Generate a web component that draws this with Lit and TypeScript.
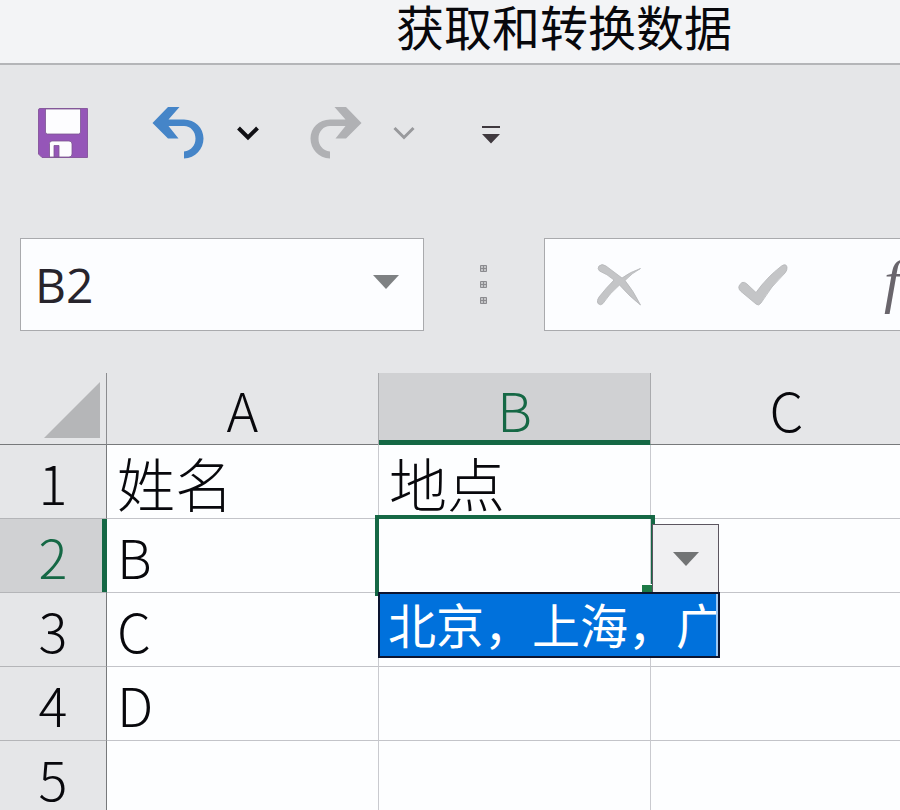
import { LitElement, html, css, svg, nothing } from "lit";
import { customElement, state } from "lit/decorators.js";

const COLUMNS = ["A", "B", "C"];
const ROWS: string[][] = [
  ["姓名", "地点", ""],
  ["B", "", ""],
  ["C", "", ""],
  ["D", "", ""],
  ["", "", ""],
];

const saveIcon = svg`<svg width="50" height="50" viewBox="0 0 50 50">
  <path d="M2 0.5H49.5V49.5H4L0.5 46V2Q0.5 0.5 2 0.5Z" fill="#9556b8" stroke="#8a5aa0"/>
  <path d="M7.500 1H42.500V24Q42.500 26 40.500 26H9.500Q7.500 26 7.500 24Z" fill="#fdfdff" stroke="#7b5590" stroke-width="0.8"/>
  <path d="M14 33H31Q34 33 34 36V46Q34 49 31 49H11.500V35.500Q11.500 33 14 33Z" fill="#fdfdff" stroke="#7b5590" stroke-width="0.8"/>
  <path d="M16 49V37.500H21V49Z" fill="#9556b8" stroke="#7b5590" stroke-width="0.8"/>
</svg>`;

const bentArrow = svg`<svg width="52" height="52" viewBox="0 0 52 52">
  <path d="M16 0H27.500L16.500 12.500H32C43 12.500 51.500 21 51.500 31.500C51.500 42 43.500 51 32 51.500V44.500C39.500 43.500 43.500 38 43.500 31.500C43.500 24.500 38.500 19 32 19H16.500L26.500 31.500H16L0.500 16Z"/>
</svg>`;

const chevron = svg`<svg width="24" height="16" viewBox="0 0 24 16">
  <path d="M2.500 3L12 12.500L21.500 3" fill="none" stroke="currentColor"/>
</svg>`;

const customizeIcon = svg`<svg width="18" height="18" viewBox="0 0 18 18">
  <path d="M0 0H18V2H0ZM0 8H18L9 17.500Z" fill="#3f393e"/>
</svg>`;

const triangle = svg`<svg class="triangle" width="26" height="14" viewBox="0 0 26 14">
  <path d="M0 0H26L13 14Z"/>
</svg>`;

const gripIcon = svg`<svg width="8" height="40" viewBox="0 0 8 40">
  ${[0, 16, 32].map(
    (y) => svg`<path d="M0.500 ${y + 0.5}h6v6h-6zM3.500 ${y}v7M0 ${y + 3.5}h7" fill="#c4c5c7" stroke="#8b8b8f"/>`
  )}
</svg>`;

const cancelIcon = svg`<svg width="44" height="42" viewBox="0 0 44 42">
  <path d="M2 2Q5 -1 9 2Q17 8 25 14Q33 8 43.500 4.500Q35 9 28 16.500Q36 26 43.500 41Q33 33 22.500 21Q12 30 6 39.500Q3.500 42 1 39.500Q-1 37 2 33Q9 24 17 16Q10 10 2.500 7Q0 4.500 2 2Z" fill="#c4c5c7" stroke="#b4b5b7" stroke-width="0.8"/>
</svg>`;

const acceptIcon = svg`<svg width="50" height="42" viewBox="0 0 50 42">
  <path d="M4 18.500Q6.500 17.500 9 20L18 28.500Q29 13 43.500 2Q48 -1 49 3Q49.500 6 47 9Q33 22 23 39Q20.500 42.500 18 40L3 27.500Q-2 23 4 18.500Z" fill="#c4c5c7" stroke="#b4b5b7" stroke-width="0.8"/>
</svg>`;

const cornerIcon = svg`<svg width="56" height="56" viewBox="0 0 56 56">
  <path d="M0 56L56 0V56Z" fill="#b5b6b8"/>
</svg>`;

@customElement("app-root")
export class AppRoot extends LitElement {
  @state() private open = true;

  static styles = css`
    :host {
      display: block;
      height: 100vh;
      overflow: hidden;
      background: #e5e6e8;
      color: #08080c;
      font-family: "Noto Sans CJK SC", sans-serif;
      font-weight: 300;
    }
    * {
      box-sizing: border-box;
    }
    button {
      display: flex;
      align-items: center;
      justify-content: center;
      padding: 0;
      border: 0;
      background: none;
      color: inherit;
      font: inherit;
    }
    svg {
      display: block;
      flex: none;
    }
    .group-title {
      margin: 0;
      padding: 0 0 13px 228px;
      border-bottom: 2px solid #b4b5b8;
      background: #f3f4f6;
      font-size: 48px;
      font-weight: 400;
      line-height: 50px;
      text-align: center;
      white-space: nowrap;
    }
    .toolbar {
      display: flex;
      align-items: center;
      height: 136px;
      padding-left: 38px;
      gap: 50px;
    }
    .save {
      margin-right: 14px;
    }
    .split {
      display: flex;
      align-items: center;
      gap: 32px;
    }
    .undo {
      color: #101014;
      fill: #4585c8;
      stroke-width: 4px;
    }
    .redo {
      gap: 30px;
      color: #98999c;
      fill: #b0b1b4;
      stroke-width: 3px;
    }
    .redo .arrow {
      transform: scaleX(-1);
    }
    .customize {
      margin-left: 16px;
      padding-top: 4px;
    }
    .formula-row {
      display: flex;
      align-items: center;
      margin: 37px 0 42px;
      padding-left: 20px;
    }
    .field {
      display: flex;
      align-items: center;
      height: 93px;
      border: 1px solid #a9aaad;
      background: #fcfdff;
    }
    .name-box {
      flex: none;
      width: 404px;
      padding: 0 24px 0 14px;
    }
    .name-input {
      flex: 1;
      min-width: 0;
      padding: 0;
      border: 0;
      outline: 0;
      background: none;
      color: #27242c;
      font: 400 48px/64px "Open Sans", "Noto Sans", sans-serif;
    }
    .triangle {
      fill: #7e8183;
    }
    .name-arrow {
      padding-bottom: 6px;
    }
    .grip {
      flex: none;
      width: 120px;
      display: flex;
      justify-content: center;
    }
    .formula-box {
      flex: 1;
      min-width: 0;
      padding-left: 52px;
      border-right: 0;
      overflow: hidden;
    }
    .accept {
      margin: 0 80px 0 97px;
    }
    .fx {
      flex: none;
      padding: 0 16px 8px;
      color: #69656c;
      font: italic 400 60px/80px "Liberation Serif", serif;
    }
    .sheet {
      width: 923px;
      min-width: 100%;
      table-layout: fixed;
      border-collapse: separate;
      border-spacing: 0;
      font-size: 54px;
      line-height: 72px;
    }
    .row-head-col {
      width: 107px;
    }
    .data-col {
      width: 272px;
    }
    th,
    td {
      height: 74px;
      padding: 0;
      border-right: 1px solid #c9cacf;
      border-bottom: 1px solid #c3c4c9;
      white-space: nowrap;
    }
    th {
      font-weight: 300;
    }
    thead th {
      height: 72px;
      line-height: 68px;
      border-right-color: #d5d6d8;
      border-bottom-color: #77797b;
    }
    tbody th {
      border-right-color: #77797b;
      border-bottom-color: #b4b5b8;
    }
    thead .corner {
      border-right-color: #8b8c8f;
    }
    .corner svg {
      margin: 2px 0 0 44px;
    }
    td {
      padding-left: 10px;
      background: #fdfeff;
    }
    .label {
      font-size: 58px;
    }
    th.active {
      background: #d0d1d3;
      color: #156845;
    }
    thead th.active {
      border-right-color: #a9aaad;
      box-shadow: -1px 0 #a9aaad, inset 0 -4px #156845;
      border-bottom-color: #156845;
    }
    tbody th.active {
      border-right-color: #156845;
      box-shadow: inset -4px 0 #156845;
    }
    .selected {
      position: relative;
    }
    .selection {
      position: absolute;
      z-index: 1;
      inset: -4px -5px -4px -4px;
      border: 4px solid #156845;
      pointer-events: none;
    }
    .handle {
      position: absolute;
      right: -1px;
      bottom: 0;
      width: 11px;
      height: 8px;
      border: solid #fdfeff;
      border-width: 1px 0 0 1px;
      background: #1d7a46;
    }
    .opener {
      position: absolute;
      z-index: 2;
      left: 273px;
      top: 5px;
      width: 67px;
      height: 69px;
      border: 1px solid #5c5560;
      background: #f0f0f2;
    }
    .opener .triangle {
      fill: #727475;
    }
    .choices {
      position: absolute;
      z-index: 3;
      left: -1px;
      top: 73px;
      width: 342px;
      border: 2px solid #0b1430;
      background: #0071dc;
    }
    .choice {
      display: block;
      width: 100%;
      height: 62px;
      padding: 0 0 4px 8px;
      border-right: 2px solid #9cc8f3;
      overflow: hidden;
      color: #fff;
      font-size: 48px;
      font-weight: 400;
      line-height: 58px;
      text-align: left;
      white-space: nowrap;
    }
  `;

  private toggle() {
    this.open = !this.open;
  }

  private renderSelection() {
    return html`
      <div class="selection"><span class="handle"></span></div>
      <button class="opener" aria-label="选择地点" aria-expanded=${this.open} @click=${this.toggle}>${triangle}</button>
      ${this.open
        ? html`<div class="choices" role="listbox" aria-label="地点">
            <button class="choice" role="option" aria-selected="true" @click=${this.toggle}>北京，上海，广</button>
          </div>`
        : nothing}
    `;
  }

  private renderCell(text: string, row: number, col: number) {
    if (row === 1 && col === 1) {
      return html`<td class="selected">${this.renderSelection()}</td>`;
    }
    return html`<td class=${row === 0 ? "label" : "value"}>${text}</td>`;
  }

  render() {
    return html`
      <h1 class="group-title" lang="zh-CN">获取和转换数据</h1>
      <div class="toolbar" role="toolbar" aria-label="快速访问工具栏">
        <button class="save" aria-label="保存">${saveIcon}</button>
        <div class="split undo">
          <button class="arrow" aria-label="撤消">${bentArrow}</button>
          <button aria-label="撤消列表">${chevron}</button>
        </div>
        <div class="split redo">
          <button class="arrow" aria-label="恢复">${bentArrow}</button>
          <button aria-label="恢复列表">${chevron}</button>
        </div>
        <button class="customize" aria-label="自定义工具栏">${customizeIcon}</button>
      </div>
      <div class="formula-row">
        <div class="field name-box">
          <input class="name-input" aria-label="名称框" value="B2" />
          <button class="name-arrow" aria-label="名称列表">${triangle}</button>
        </div>
        <div class="grip">${gripIcon}</div>
        <div class="field formula-box">
          <button aria-label="取消">${cancelIcon}</button>
          <button class="accept" aria-label="输入">${acceptIcon}</button>
          <button class="fx" aria-label="插入函数">fx</button>
        </div>
      </div>
      <table class="sheet" lang="zh-CN">
        <colgroup>
          <col class="row-head-col" />
          ${COLUMNS.map(() => html`<col class="data-col" />`)}
        </colgroup>
        <thead>
          <tr>
            <th class="corner" aria-label="全选">${cornerIcon}</th>
            ${COLUMNS.map((c, i) => html`<th scope="col" class=${i === 1 ? "active" : ""}>${c}</th>`)}
          </tr>
        </thead>
        <tbody>
          ${ROWS.map(
            (cells, r) => html`<tr>
              <th scope="row" class=${r === 1 ? "active" : ""}>${r + 1}</th>
              ${cells.map((text, c) => this.renderCell(text, r, c))}
            </tr>`
          )}
        </tbody>
      </table>
    `;
  }
}
